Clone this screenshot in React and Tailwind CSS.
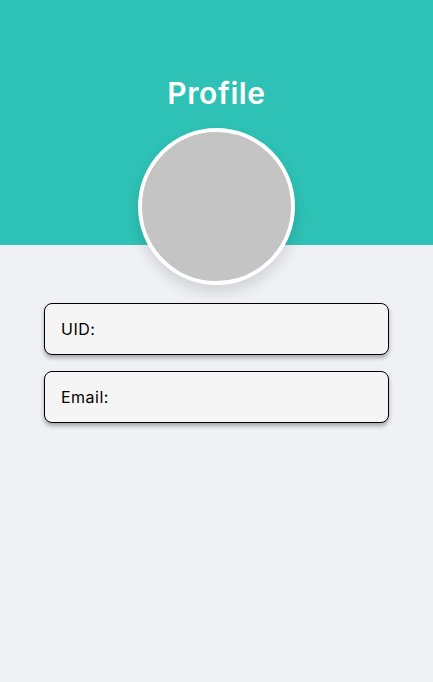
import React from 'react';

const Field = ({ label }) => (
  <div className="h-[52px] w-[345px] rounded-lg border border-black bg-[#f5f5f5] flex items-center px-4 shadow-[0_3px_4px_rgba(0,0,0,0.3)]">
    <span className="text-[16px] tracking-[0.03em] text-black">{label}</span>
  </div>
);

const App = () => {
  return (
    <div className="min-h-[682px] bg-[#f0f1f5] font-['Inter',sans-serif]">
      <div className="h-[245px] bg-[#2ec1b5] flex flex-col items-center pt-[74px]">
        <h1 className="text-[30px] leading-[38px] font-semibold tracking-[0.02em] text-white">Profile</h1>
        <div className="relative z-10 mt-[16px] h-[157px] w-[157px] shrink-0 rounded-full border-4 border-white bg-[#c4c4c4] shadow-[0_8px_14px_rgba(0,0,0,0.12)]" />
      </div>
      <div className="flex flex-col items-center gap-4 pt-[58px]">
        <Field label="UID:" />
        <Field label="Email:" />
      </div>
    </div>
  );
};

export default App;
